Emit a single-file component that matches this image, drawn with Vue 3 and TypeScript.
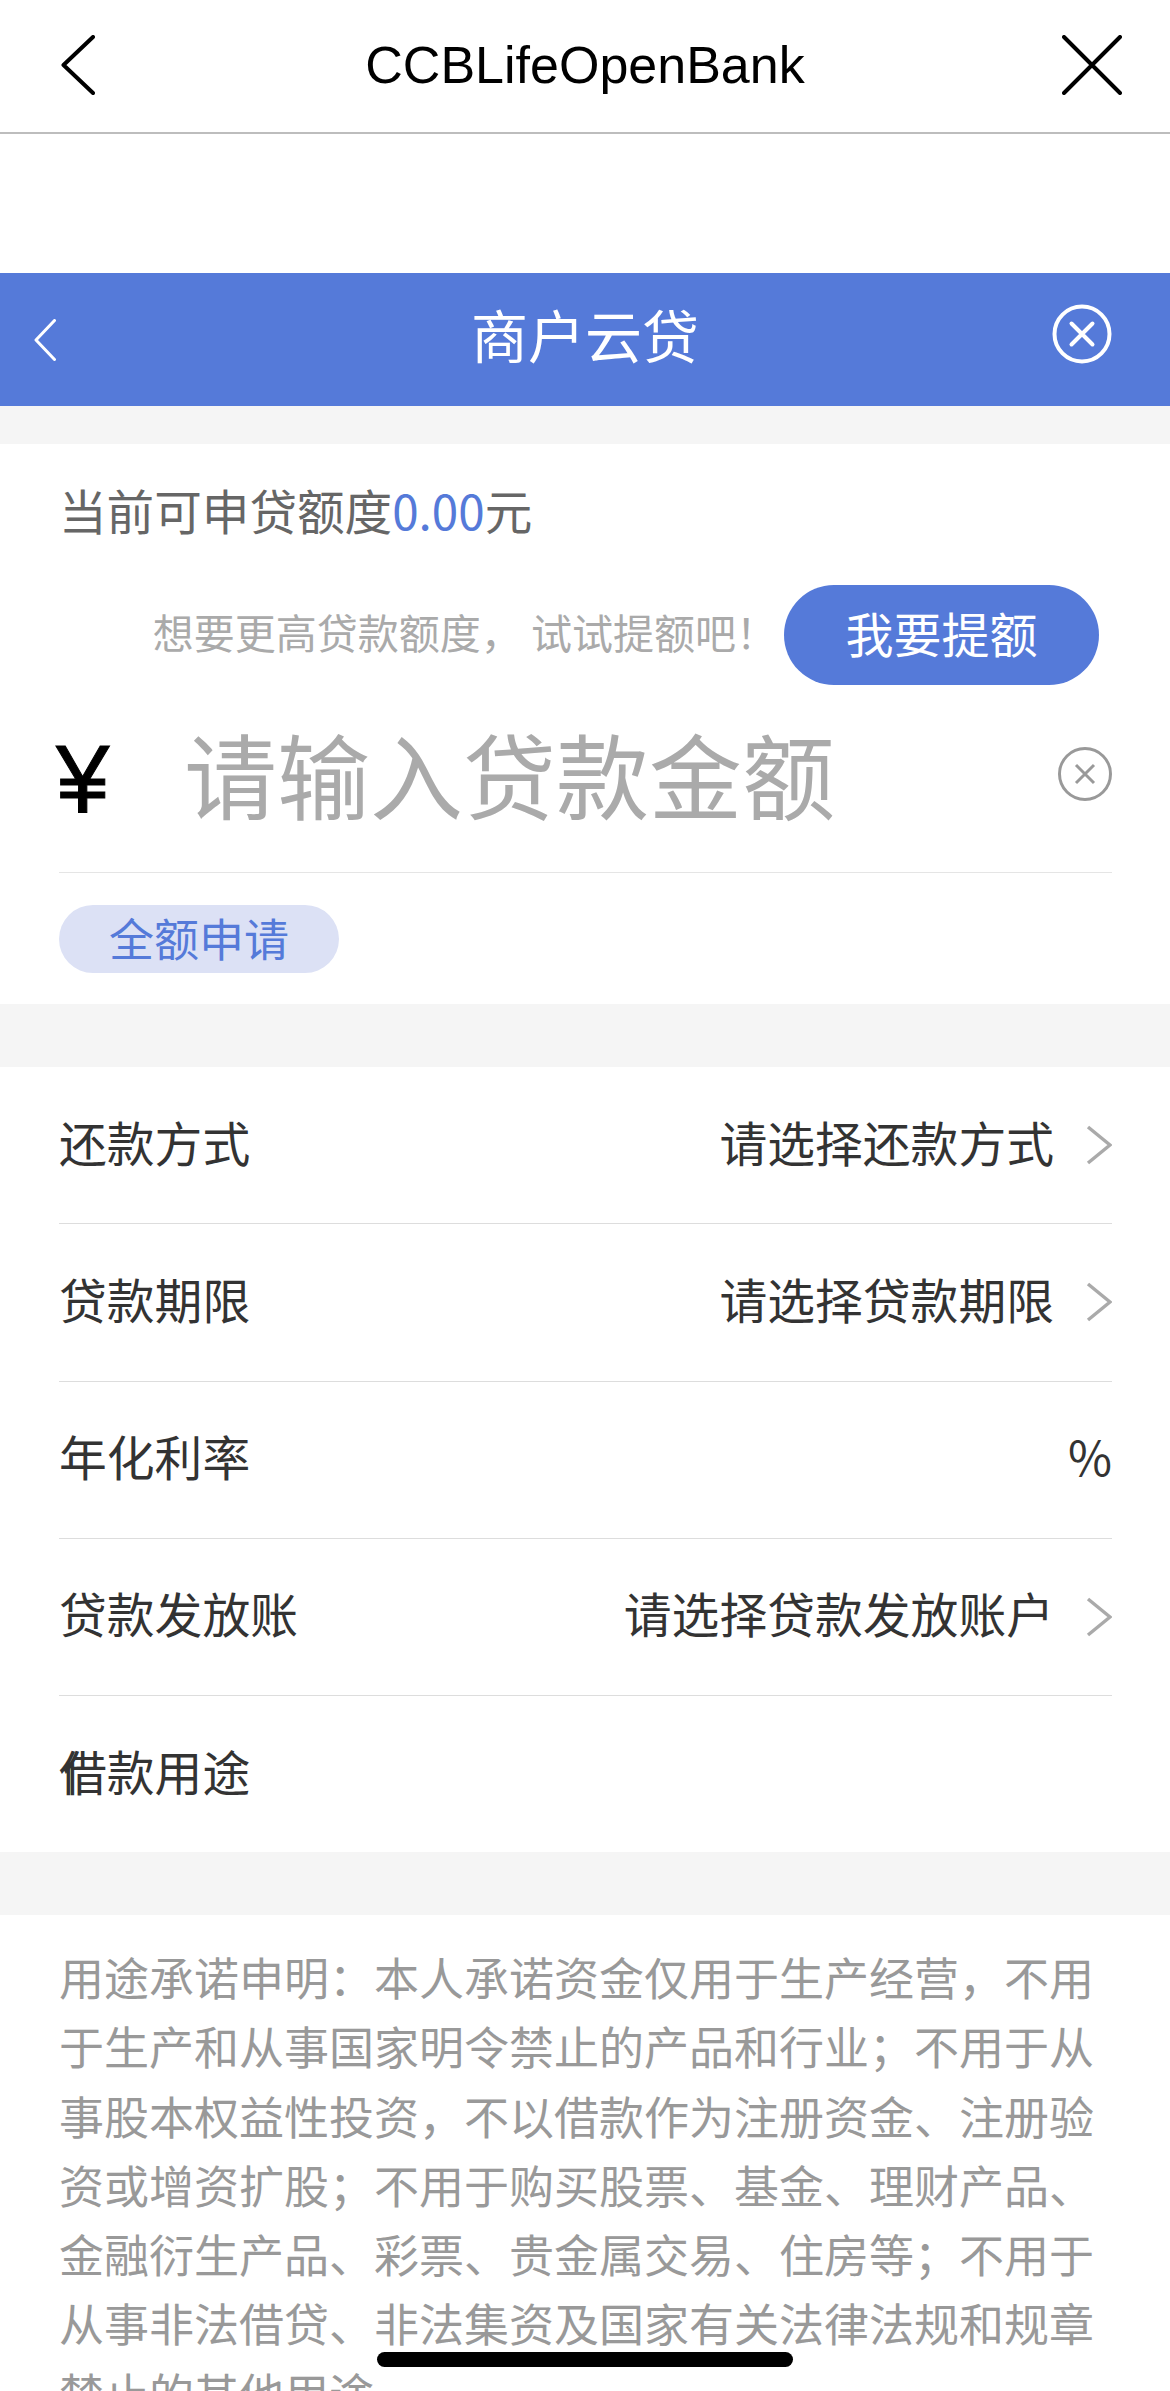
<script setup lang="ts">
interface LoanRow {
  label: string
  value?: string
  arrow?: boolean
  doubled?: boolean
}

const rows: LoanRow[] = [
  { label: '还款方式', value: '请选择还款方式', arrow: true },
  { label: '贷款期限', value: '请选择贷款期限', arrow: true },
  { label: '年化利率', value: '%' },
  { label: '贷款发放账', value: '请选择贷款发放账户', arrow: true },
  { label: '借款用途', doubled: true },
]

const notice =
  '用途承诺申明：本人承诺资金仅用于生产经营，不用于生产和从事国家明令禁止的产品和行业；不用于从事股本权益性投资，不以借款作为注册资金、注册验资或增资扩股；不用于购买股票、基金、理财产品、金融衍生产品、彩票、贵金属交易、住房等；不用于从事非法借贷、非法集资及国家有关法律法规和规章禁止的其他用途'
</script>

<template>
  <div class="page">
    <header class="web-bar">
      <svg class="web-back" viewBox="0 0 34 60" width="34" height="60">
        <path d="M32 2 L2.5 30 L32 58" />
      </svg>
      <span class="web-title">CCBLifeOpenBank</span>
      <svg class="web-x" viewBox="0 0 60 60" width="60" height="60">
        <path d="M2 2 L58 58 M58 2 L2 58" />
      </svg>
    </header>
    <div class="web-gap"></div>

    <div class="nav">
      <svg class="nav-back" viewBox="0 0 22 42" width="22" height="42">
        <path d="M20.5 1.5 L2 21 L20.5 40.5" />
      </svg>
      <span class="nav-title">商户云贷</span>
      <svg class="nav-close" viewBox="0 0 60 60" width="60" height="60">
        <circle cx="30" cy="30" r="27.5" />
        <path d="M19.5 19.5 L40.5 40.5 M40.5 19.5 L19.5 40.5" />
      </svg>
    </div>

    <section class="card amount">
      <div class="quota">当前可申贷额度<span class="blue">0.00</span>元</div>
      <div class="raise">
        <span class="raise-hint">想要更高贷款额度， 试试提额吧！</span>
        <button type="button" class="raise-btn">我要提额</button>
      </div>
      <div class="input-row">
        <span class="yen">¥</span>
        <span class="placeholder">请输入贷款金额</span>
        <svg class="input-clear" viewBox="0 0 54 54" width="54" height="54">
          <circle cx="27" cy="27" r="25.5" />
          <path d="M18 18 L36 36 M36 18 L18 36" />
        </svg>
      </div>
      <button type="button" class="full-btn">全额申请</button>
    </section>

    <section class="card list">
      <div v-for="row in rows" :key="row.label" class="row">
        <span class="row-label">
          <span v-if="row.doubled" class="ghost">借</span>{{ row.label }}
        </span>
        <span v-if="row.value" class="row-value">{{ row.value }}</span>
        <svg v-if="row.arrow" class="row-arrow" viewBox="0 0 26 40" width="26" height="40">
          <path d="M2 2 L24 20 L2 38" />
        </svg>
      </div>
    </section>

    <section class="card notice">{{ notice }}</section>

    <div class="home-bar"></div>
  </div>
</template>

<style scoped>
.page {
  position: relative;
  width: 1170px;
  height: 2391px;
  overflow: hidden;
  background: #f5f5f5;
  font-family: "Noto Sans CJK SC", "Liberation Sans", sans-serif;
  text-spacing-trim: space-all;
}
.web-bar {
  display: grid;
  grid-template-columns: 1fr auto 1fr;
  align-items: center;
  box-sizing: border-box;
  height: 134px;
  padding: 0 48px 2px;
  background: #fff;
  border-bottom: 2px solid #bdbdbd;
}
.web-back,
.web-x {
  fill: none;
  stroke: #000;
  stroke-width: 4;
  stroke-linecap: round;
  stroke-linejoin: round;
}
.web-back {
  margin-left: 13px;
}
.web-x {
  justify-self: end;
}
.web-title {
  font-family: "Liberation Sans", sans-serif;
  font-size: 52px;
  color: #000;
}
.web-gap {
  height: 139px;
  background: #fff;
}
.nav {
  display: grid;
  grid-template-columns: 1fr auto 1fr;
  align-items: center;
  height: 133px;
  padding: 0 58px;
  background: #557ad9;
}
.nav-back {
  margin-left: -24px;
  fill: none;
  stroke: #fff;
  stroke-width: 3;
  stroke-linecap: round;
  stroke-linejoin: round;
}
.nav-title {
  padding-bottom: 14px;
  font-size: 57px;
  color: #fff;
}
.nav-close {
  justify-self: end;
  margin-bottom: 12px;
  fill: none;
  stroke: #fff;
  stroke-width: 4;
  stroke-linecap: round;
}
.card {
  background: #fff;
}
.amount {
  margin-top: 38px;
  height: 560px;
  box-sizing: border-box;
  padding: 32px 58px 0 59px;
}
.quota {
  font-size: 47.6px;
  line-height: 68px;
  color: #666;
}
.blue {
  color: #557ad9;
}
.raise {
  display: flex;
  align-items: center;
  justify-content: flex-end;
  gap: 7px;
  margin-top: 41px;
  padding-right: 13px;
}
.raise-hint {
  padding-bottom: 8px;
  font-size: 41px;
  color: #aaa;
}
.raise-btn {
  width: 315px;
  height: 100px;
  border: none;
  border-radius: 50px;
  padding: 0 0 6px;
  background: #557ad9;
  color: #fff;
  font-family: inherit;
  font-size: 48px;
}
.input-row {
  display: flex;
  align-items: center;
  height: 188px;
  box-sizing: border-box;
  border-bottom: 1px solid #e5e5e5;
}
.yen {
  width: 128px;
  margin-left: -3px;
  font-family: "Liberation Sans", sans-serif;
  font-size: 96px;
  -webkit-text-stroke: 1px #000;
  color: #000;
}
.placeholder {
  flex: 1;
  padding-bottom: 12px;
  font-size: 93px;
  color: #aaa;
}
.input-clear {
  margin-bottom: 10px;
  fill: none;
  stroke: #999;
  stroke-width: 3;
}
.full-btn {
  display: block;
  width: 280px;
  height: 68px;
  margin-top: 32px;
  border: none;
  border-radius: 34px;
  padding: 0 0 12px;
  background: #dce1f5;
  color: #557ad9;
  font-family: inherit;
  font-size: 45px;
}
.list {
  margin-top: 63px;
  padding: 0 58px 0 59px;
}
.row {
  display: flex;
  align-items: center;
  box-sizing: border-box;
  height: 157.25px;
  border-bottom: 1px solid #ddd;
  font-size: 47.8px;
  color: #333;
}
.row:last-child {
  height: 156px;
  border-bottom: none;
}
.row-label {
  position: relative;
  flex: 1;
  padding-bottom: 8px;
}
.ghost {
  position: absolute;
  left: 4px;
  top: 0;
  clip-path: inset(0 62% 0 0);
}
.row-value {
  padding-bottom: 8px;
}
.row-arrow {
  margin-left: 32px;
  fill: none;
  stroke: #aaa;
  stroke-width: 3.5;
}
.notice {
  margin-top: 63px;
  padding: 27px 58px 0 59px;
  font-size: 45px;
  line-height: 69.3px;
  color: #999;
}
.home-bar {
  position: absolute;
  left: 377px;
  top: 2352px;
  width: 416px;
  height: 15px;
  border-radius: 8px;
  background: #000;
}
</style>
